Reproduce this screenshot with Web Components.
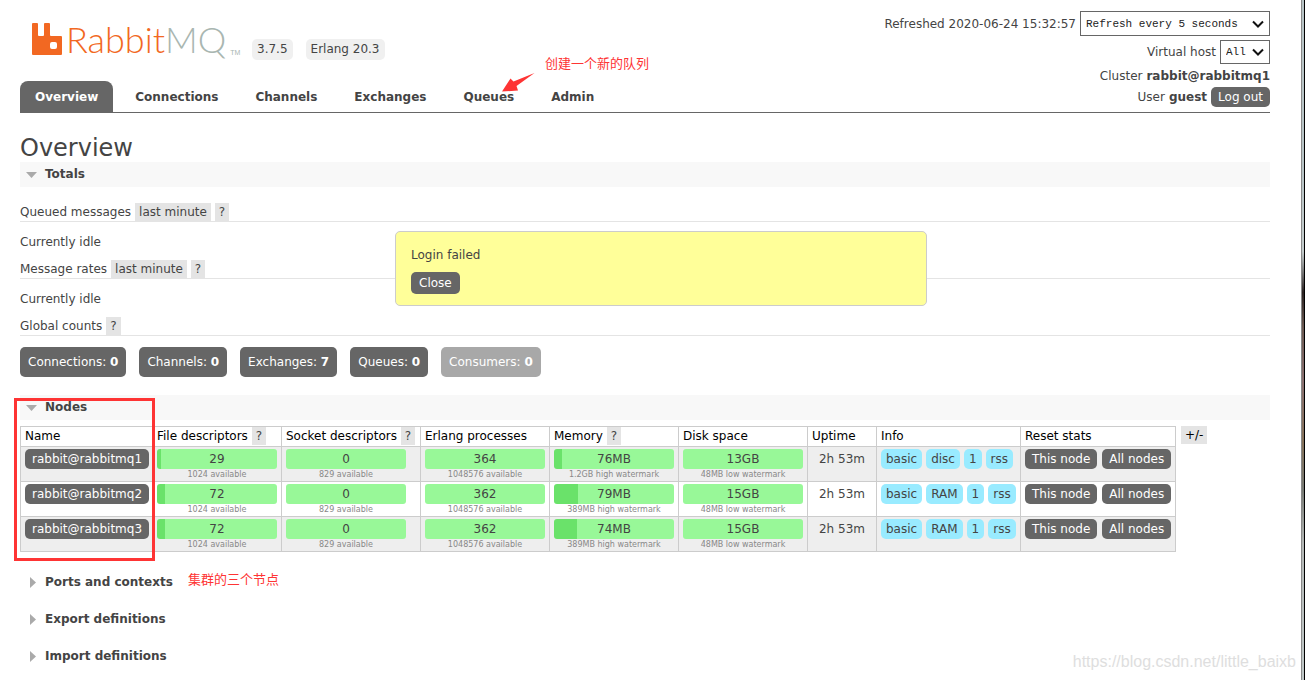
<!DOCTYPE html>
<html lang="en">
<head>
<meta charset="utf-8">
<title>RabbitMQ Management</title>
<style>
  html, body { margin: 0; background: #fff; }
  body { font: 12px/18px "DejaVu Sans", Verdana, sans-serif; color: #444; min-height: 100vh; }
</style>
</head>
<body>
<rmq-app></rmq-app>
<script>
const define = (name, html, setup) => {
  const tpl = document.createElement('template');
  tpl.innerHTML = html;
  customElements.define(name, class extends HTMLElement {
    constructor() {
      super();
      this.attachShadow({ mode: 'open' }).append(tpl.content.cloneNode(true));
    }
    connectedCallback() { if (setup) setup(this, this.shadowRoot); }
  });
};

/* dark action button */
define('rmq-button', `
<style>
  :host { display: inline-block; }
  button { display: block; font: inherit; line-height: 16px; color: #fff; background: #666; border: 0;
    border-radius: 5px; padding: var(--pad, 2px 7px); cursor: pointer; white-space: nowrap; }
</style>
<button type="button"><slot></slot></button>`);

/* grey inline link-like chip: "?", "last minute", "+/-" */
define('rmq-chip', `
<style>
  :host { display: inline-block; }
  button { display: block; font: inherit; line-height: 18px; color: inherit; background: #e4e4e4; border: 0; padding: 0 4px; cursor: pointer; }
</style>
<button type="button"><slot></slot></button>`);

define('rmq-logo', `
<style>
  :host { display: block; width: 205px; }
  a { display: flex; gap: 4px; align-items: center; text-decoration: none; color: #f26822; height: 36px; }
  svg { display: block; flex: none; width: 30px; height: 33px; }
  .word { font: 36px/36px "Lato Light", Lato, sans-serif; font-weight: 300; white-space: nowrap; }
  .mq { color: #a9b6b1; }
  small { font: 7px/8px "Liberation Sans", sans-serif; color: #a9b6b1; align-self: flex-end; }
</style>
<a href="#/">
  <svg viewBox="0 0 30 33" aria-hidden="true"><path fill="#f26822" fill-rule="evenodd" d="M1 0H5Q6 0 6 1V12Q6 13 7 13H11Q12 13 12 12V1Q12 0 13 0H17Q18 0 18 1V12Q18 13 19 13H29Q30 13 30 14V31Q30 32 29 32H1Q0 32 0 31V1Q0 0 1 0zM20 19q-2 0-2 2v3q0 2 2 2h3q2 0 2-2v-3q0-2-2-2z"/></svg>
  <span class="word">Rabbit<span class="mq">MQ</span></span><small>TM</small>
</a>`);

define('rmq-header', `
<style>
  :host { display: flex; justify-content: space-between; border-bottom: 1px solid #666; }
  .left { display: flex; flex-direction: column; justify-content: space-between; }
  .brand { display: flex; align-items: flex-start; padding: 21px 0 0 12px; }
  .versions { display: flex; gap: 13px; padding: 18px 0 0 15px; }
  .versions span { background: #f0f0f0; border-radius: 5px; padding: 2px 5px; line-height: 17px; }
  nav { display: flex; gap: 7px; position: relative; }
  nav a { font-weight: bold; color: #444; text-decoration: none; padding: 7px 15px 6px; border-radius: 8px 8px 0 0; }
  nav a[aria-current] { background: #666; color: #fff; }
  .right { display: flex; flex-direction: column; align-items: flex-end; padding: 11px 0 5px; }
  .row { display: flex; align-items: center; gap: 4px; }
  .row.sel { margin-bottom: 4px; }
  .row.cluster { padding: 3px 0 2px; }
  .pick { position: relative; display: block; }
  .pick svg { position: absolute; right: 6px; top: 50%; margin-top: -4px; pointer-events: none; }
  select { display: block; appearance: none; font: 11px/18px "Liberation Mono", monospace; color: #222; background: #fff;
    border: 1px solid #666; border-radius: 0; padding: 2px 31px 2px 5px; height: 25px; }
  .pick.small select { padding-right: 23px; height: 24px; }
  .note { position: absolute; left: 525px; top: -27px; color: #fe3434; font: 13px/18px "Noto Sans CJK SC", sans-serif; white-space: nowrap; }
  .arrow { position: absolute; left: 482px; top: -8px; }
</style>
<div class="left">
  <div class="brand"><rmq-logo></rmq-logo><div class="versions"><span>3.7.5</span><span>Erlang 20.3</span></div></div>
  <nav>
    <a href="#/" aria-current="page">Overview</a><a href="#/connections">Connections</a><a href="#/channels">Channels</a><a href="#/exchanges">Exchanges</a><a href="#/queues">Queues</a><a href="#/users">Admin</a>
    <span class="note">创建一个新的队列</span>
    <svg class="arrow" width="33" height="19" viewBox="0 0 33 19" aria-hidden="true"><path fill="#fe3434" d="M0 18.500L8.500 5.500L11.500 8.500L32.500 0L14.500 13L16 17.500Z"/></svg>
  </nav>
</div>
<div class="right">
  <div class="row sel"><label for="upd">Refreshed 2020-06-24 15:32:57</label><span class="pick"><select id="upd"><option>Refresh every 5 seconds</option></select><svg width="12" height="8" viewBox="0 0 12 8"><path d="M1 1.500L6 6.500L11 1.500" fill="none" stroke="#111" stroke-width="2"/></svg></span></div>
  <div class="row"><label for="vh">Virtual host</label><span class="pick small"><select id="vh"><option>All</option></select><svg width="12" height="8" viewBox="0 0 12 8"><path d="M1 1.500L6 6.500L11 1.500" fill="none" stroke="#111" stroke-width="2"/></svg></span></div>
  <div class="row cluster">Cluster <b>rabbit@rabbitmq1</b></div>
  <div class="row">User <b>guest</b><rmq-button>Log out</rmq-button></div>
</div>`);

/* collapsible section */
define('rmq-section', `
<style>
  :host { display: block; }
  h2 { margin: 0; font-size: 12px; line-height: 25px; }
  button { display: flex; align-items: center; width: 100%; font: bold 12px/25px "DejaVu Sans", Verdana, sans-serif; color: #444; background: none; border: 0; padding: 0 0 0 6px; text-align: left; cursor: pointer; }
  :host([open]) button { background: #f8f8f8; }
  svg { width: 12px; height: 12px; margin-right: 7px; }
  .down, :host([open]) .side { display: none; }
  :host([open]) .down { display: block; }
  :host(:not([open])) .body { display: none; }
</style>
<h2><button type="button"><svg class="down" viewBox="0 0 12 12"><path fill="#aaa" d="M0 3h11L5.500 9z"/></svg><svg class="side" viewBox="0 0 12 12"><path fill="#aaa" d="M4 0v11l6-5.500z"/></svg><span></span></button></h2>
<div class="body"><slot></slot></div>`, (el, root) => {
  root.querySelector('span').textContent = el.getAttribute('heading');
  const b = root.querySelector('button');
  b.setAttribute('aria-expanded', el.hasAttribute('open'));
  b.onclick = () => b.setAttribute('aria-expanded', el.toggleAttribute('open'));
});

define('rmq-totals', `
<style>
  :host { display: block; padding-top: 16px; }
  h3 { margin: 0; font-size: 12px; font-weight: normal; display: flex; gap: 4px; line-height: 18px; border-bottom: 1px solid #e4e4e4; }
  p { margin: 0; padding: 11px 0 9px; line-height: 18px; }
  .counts { display: flex; flex-wrap: wrap; gap: 13px; padding-top: 11px; --pad: 7px 8px; }
  .off { opacity: .56; }
</style>
<h3>Queued messages <rmq-chip>last minute</rmq-chip><rmq-chip>?</rmq-chip></h3>
<p>Currently idle</p>
<h3>Message rates <rmq-chip>last minute</rmq-chip><rmq-chip>?</rmq-chip></h3>
<p>Currently idle</p>
<h3>Global counts <rmq-chip>?</rmq-chip></h3>
<div class="counts">
  <rmq-button>Connections: <b>0</b></rmq-button><rmq-button>Channels: <b>0</b></rmq-button><rmq-button>Exchanges: <b>7</b></rmq-button><rmq-button>Queues: <b>0</b></rmq-button><rmq-button class="off">Consumers: <b>0</b></rmq-button>
</div>`);

/* usage bar: value over a part-filled track, with its limit below */
define('rmq-bar', `
<style>
  :host { display: block; max-width: 120px; }
  .track { border-radius: 3px; text-align: center; line-height: 20px; height: 20px; color: #444; }
  .limit { font-size: 8px; line-height: 11px; color: #888; text-align: center; white-space: nowrap; }
</style>
<div class="track"></div><div class="limit"></div>`, (el, root) => {
  const t = root.querySelector('.track'), f = (el.getAttribute('fill') || 0) + '%';
  t.textContent = el.getAttribute('value');
  t.style.background = 'linear-gradient(90deg, #6ae26a ' + f + ', #98f898 ' + f + ')';
  root.querySelector('.limit').textContent = el.getAttribute('limit');
});

define('rmq-nodes', `
<style>
  :host { display: flex; gap: 5px; align-items: flex-start; padding-top: 6px; position: relative; }
  table { table-layout: fixed; width: 1156px; border-collapse: separate; border-spacing: 0; border: solid #ccc; border-width: 1px 0 0 1px; }
  th, td { border: solid #ccc; border-width: 0 1px 1px 0; text-align: left; white-space: nowrap; padding: 0 4px; }
  th { font-weight: normal; color: #000; height: 19px; line-height: 19px; }
  th rmq-chip { vertical-align: top; color: #444; }
  td { height: 32px; padding-top: 2px; vertical-align: top; }
  tbody tr:nth-child(odd) { background: #eee; }
  .up { text-align: center; line-height: 20px; }
  .tags { display: flex; gap: 4px; }
  .tags span { background: #99ebff; border-radius: 5px; padding: 0 5px; line-height: 20px; }
  .acts { display: flex; gap: 5px; }
  .more { color: #000; }
  .frame { position: absolute; left: -6px; top: -22px; bottom: -9px; width: 135px; border: 3px solid #fe3434; pointer-events: none; }
</style>
<table>
  <colgroup><col style="width:132px"><col style="width:129px"><col style="width:139px"><col style="width:129px"><col style="width:129px"><col style="width:129px"><col style="width:69px"><col style="width:144px"><col style="width:155px"></colgroup>
  <thead><tr><th scope="col">Name</th><th scope="col">File descriptors <rmq-chip>?</rmq-chip></th><th scope="col">Socket descriptors <rmq-chip>?</rmq-chip></th><th scope="col">Erlang processes</th><th scope="col">Memory <rmq-chip>?</rmq-chip></th><th scope="col">Disk space</th><th scope="col">Uptime</th><th scope="col">Info</th><th scope="col">Reset stats</th></tr></thead>
  <tbody></tbody>
</table>
<rmq-chip class="more">+/-</rmq-chip>
<div class="frame"></div>`, (el, root) => {
  const rows = [
    ['rabbit@rabbitmq1', 29, 3, 364, '76MB', 7, '1.2GB', '13GB', 'disc'],
    ['rabbit@rabbitmq2', 72, 7, 362, '79MB', 20, '389MB', '15GB', 'RAM'],
    ['rabbit@rabbitmq3', 72, 7, 362, '74MB', 19, '389MB', '15GB', 'RAM']
  ];
  const bar = (v, f, l) => `<td><rmq-bar value="${v}" fill="${f}" limit="${l}"></rmq-bar></td>`;
  root.querySelector('tbody').innerHTML = rows.map(r => `<tr>
    <td><rmq-button>${r[0]}</rmq-button></td>
    ${bar(r[1], r[2], '1024 available')}
    ${bar(0, 0, '829 available')}
    ${bar(r[3], 0, '1048576 available')}
    ${bar(r[4], r[5], r[6] + ' high watermark')}
    ${bar(r[7], 0, '48MB low watermark')}
    <td class="up">2h 53m</td>
    <td><div class="tags"><span>basic</span><span>${r[8]}</span><span>1</span><span>rss</span></div></td>
    <td><div class="acts"><rmq-button>This node</rmq-button><rmq-button>All nodes</rmq-button></div></td></tr>`).join('');
});

define('rmq-popup', `
<style>
  :host { position: absolute; left: 50%; top: 231px; margin-left: -250px; width: 500px; padding: 14px 15px 11px;
    background: #ffff99; border: 1px solid #ccc; border-radius: 5px; }
  p { margin: 0 0 8px; line-height: 18px; }
</style>
<p><slot></slot></p>
<rmq-button style="--pad:3px 8px">Close</rmq-button>`);

define('rmq-app', `
<style>
  :host { display: block; position: relative; min-height: 100vh; box-sizing: border-box; padding-right: 15px; overflow: hidden; }
  .edge { position: absolute; right: 0; top: 0; bottom: 0; width: 2px; border: solid #888; border-width: 0 0 0 1px; box-shadow: inset -1px 0 #000; padding-right: 1px;
    background: linear-gradient(#b8c4c6 0 25%, #c4cccc 37%, #2a2222 43%, #6a5850 48%, #8a7070 56%, #85725a 65%, #777a74 72%, #b4b8b6 80%, #c0c8c8); }
  .page { position: relative; }
  main, .top { margin: 0 20px; }
  h1 { margin: 0; padding-top: 21px; font-size: 24px; line-height: 28px; font-weight: normal; }
  .nodes { margin-top: 18px; }
  .rest { position: relative; display: grid; gap: 12px; margin-top: 18px; }
  .note { position: absolute; left: 168px; top: 0; color: #fe3434; font: 13px/18px "Noto Sans CJK SC", sans-serif; }
  .mark { position: absolute; right: 9px; bottom: 8px; font: 16px/20px "Liberation Sans", Arial, sans-serif; color: #dedede; }
</style>
<div class="page">
  <rmq-header class="top"></rmq-header>
  <main>
    <h1>Overview</h1>
    <rmq-section heading="Totals" open><rmq-totals></rmq-totals></rmq-section>
    <rmq-section class="nodes" heading="Nodes" open><rmq-nodes></rmq-nodes></rmq-section>
    <div class="rest">
      <rmq-section heading="Ports and contexts"></rmq-section>
      <rmq-section heading="Export definitions"></rmq-section>
      <rmq-section heading="Import definitions"></rmq-section>
      <span class="note">集群的三个节点</span>
    </div>
  </main>
  <rmq-popup role="alert">Login failed</rmq-popup>
</div>
<div class="edge"></div>
<div class="mark">https://blog.csdn.net/little_baixb</div>`);
</script>
</body>
</html>
